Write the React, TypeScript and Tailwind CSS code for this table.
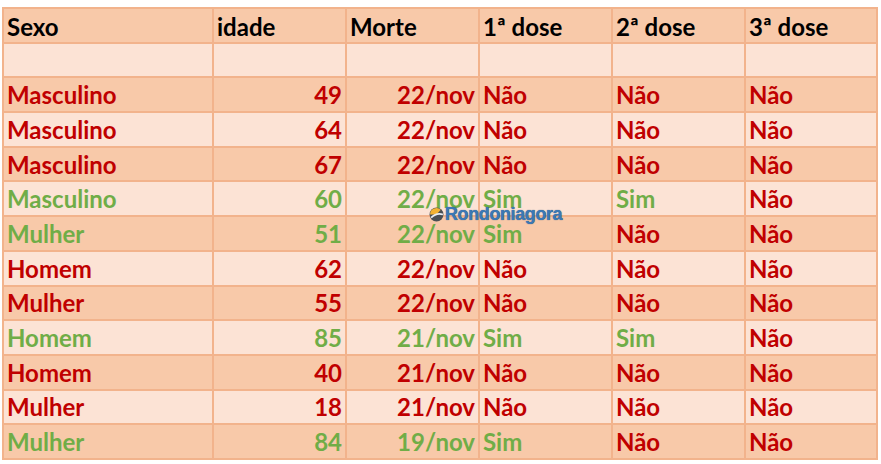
import React from 'react';

type Row = {
  sexo: string;
  idade: number;
  morte: string;
  d1: string;
  d2: string;
  d3: string;
};

const RED = 'text-[#c00000]';
const GREEN = 'text-[#70ad47]';

const rows: Row[] = [
  { sexo: 'Masculino', idade: 49, morte: '22/nov', d1: 'Não', d2: 'Não', d3: 'Não' },
  { sexo: 'Masculino', idade: 64, morte: '22/nov', d1: 'Não', d2: 'Não', d3: 'Não' },
  { sexo: 'Masculino', idade: 67, morte: '22/nov', d1: 'Não', d2: 'Não', d3: 'Não' },
  { sexo: 'Masculino', idade: 60, morte: '22/nov', d1: 'Sim', d2: 'Sim', d3: 'Não' },
  { sexo: 'Mulher', idade: 51, morte: '22/nov', d1: 'Sim', d2: 'Não', d3: 'Não' },
  { sexo: 'Homem', idade: 62, morte: '22/nov', d1: 'Não', d2: 'Não', d3: 'Não' },
  { sexo: 'Mulher', idade: 55, morte: '22/nov', d1: 'Não', d2: 'Não', d3: 'Não' },
  { sexo: 'Homem', idade: 85, morte: '21/nov', d1: 'Sim', d2: 'Sim', d3: 'Não' },
  { sexo: 'Homem', idade: 40, morte: '21/nov', d1: 'Não', d2: 'Não', d3: 'Não' },
  { sexo: 'Mulher', idade: 18, morte: '21/nov', d1: 'Não', d2: 'Não', d3: 'Não' },
  { sexo: 'Mulher', idade: 84, morte: '19/nov', d1: 'Sim', d2: 'Não', d3: 'Não' },
];

const headers = ['Sexo', 'idade', 'Morte', '1ª dose', '2ª dose', '3ª dose'];

function Cell({
  children,
  dark,
  align = 'left',
  color = '',
  header = false,
}: {
  children?: React.ReactNode;
  dark: boolean;
  align?: 'left' | 'right';
  color?: string;
  header?: boolean;
}) {
  return (
    <div
      className={`flex items-center whitespace-nowrap overflow-hidden ${header ? 'pt-[4px]' : 'pt-[1px]'} ${
        dark ? 'bg-[#f8c9a9]' : 'bg-[#fce3d5]'
      } ${align === 'right' ? 'justify-end pr-[3px]' : 'justify-start pl-[3px]'} ${color}`}
    >
      {children}
    </div>
  );
}

function Watermark() {
  return (
    <div className="absolute left-[429px] top-[205px] flex items-center gap-[1px] pointer-events-none">
      <svg width="15" height="15" viewBox="0 0 14 14">
        <circle cx="7" cy="7" r="6.5" fill="#4a4f55" />
        <path d="M1 7 A6 6 0 0 1 11 2.5 L7 7 Z" fill="#f2b233" />
        <path d="M2 10 Q7 5 13 7" stroke="#e9eef4" strokeWidth="1.6" fill="none" />
      </svg>
      <span
        className="text-[18px] font-bold leading-none tracking-[-0.4px] text-[#3b78b5] [text-shadow:0_0_1px_#2c4f75]"
        style={{ fontFamily: '"Liberation Sans", Arial, sans-serif' }}
      >
        Rondoniagora
      </span>
    </div>
  );
}

export default function App() {
  return (
    <div className="w-[881px] h-[464px] bg-white relative overflow-hidden">
      <div
        className="absolute left-[2px] top-[7px] grid grid-cols-[208px_131px_131px_131px_131px_130px] grid-rows-[repeat(13,32.7px)] gap-[2px] p-[2px] bg-[#f2b38c] text-[24px] font-bold leading-none"
        style={{ fontFamily: 'Lato, "Open Sans", sans-serif' }}
      >
        {headers.map((h) => (
          <Cell key={h} dark header color="text-black">
            {h}
          </Cell>
        ))}
        {headers.map((h) => (
          <Cell key={`e-${h}`} dark={false} />
        ))}
        {rows.map((r, i) => {
          const dark = i % 2 === 0;
          const c = r.d1 === 'Sim' ? GREEN : RED;
          return (
            <React.Fragment key={i}>
              <Cell dark={dark} color={c}>
                {r.sexo}
              </Cell>
              <Cell dark={dark} align="right" color={c}>
                {r.idade}
              </Cell>
              <Cell dark={dark} align="right" color={c}>
                {r.morte}
              </Cell>
              <Cell dark={dark} color={r.d1 === 'Sim' ? GREEN : RED}>
                {r.d1}
              </Cell>
              <Cell dark={dark} color={r.d2 === 'Sim' ? GREEN : RED}>
                {r.d2}
              </Cell>
              <Cell dark={dark} color={r.d3 === 'Sim' ? GREEN : RED}>
                {r.d3}
              </Cell>
            </React.Fragment>
          );
        })}
      </div>
      <Watermark />
    </div>
  );
}
